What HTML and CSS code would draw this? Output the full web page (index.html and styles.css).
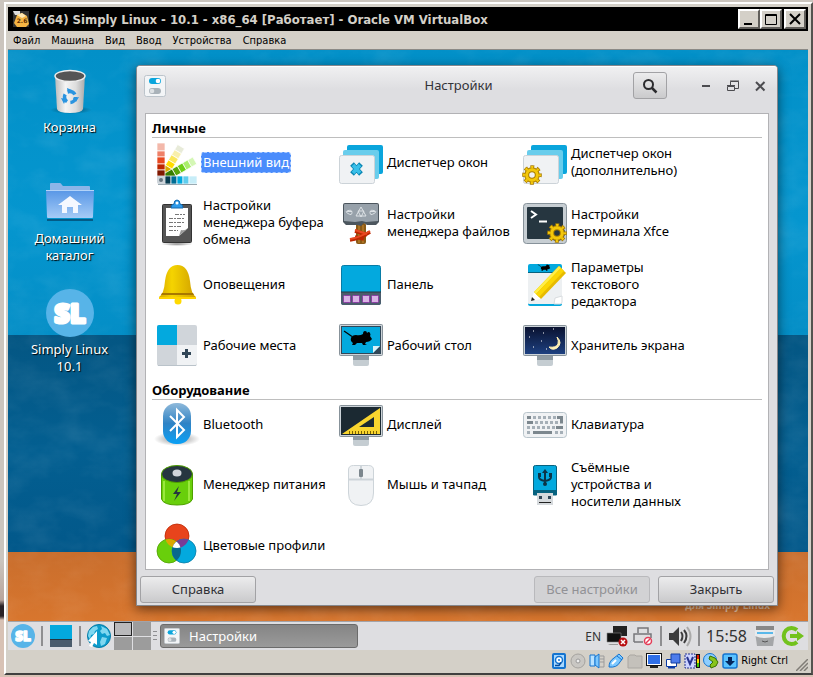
FILE: index.html
```html
<!DOCTYPE html>
<html lang="ru">
<head>
    <meta charset="UTF-8">
    <meta name="viewport" content="width=device-width, initial-scale=1.0">
    <link rel="stylesheet" href="styles.css">
    <title>Simply Linux - Oracle VM VirtualBox</title>
</head>
<body>
    <!-- shared shapes -->
    <svg class="defs" width="0" height="0" aria-hidden="true">
        <defs>
            <linearGradient id="metal" x1="0" x2="1"><stop offset="0" stop-color="#bbb"/><stop offset=".35" stop-color="#f4f4f4"/><stop offset=".7" stop-color="#ddd"/><stop offset="1" stop-color="#aaa"/></linearGradient>
            <linearGradient id="gold" x1="0" x2="1"><stop offset="0" stop-color="#d9a900"/><stop offset=".35" stop-color="#f5d400"/><stop offset="1" stop-color="#d0a000"/></linearGradient>
            <linearGradient id="folder" x1="0" x2="0" y1="0" y2="1"><stop offset="0" stop-color="#5796e6"/><stop offset="1" stop-color="#a5cbf6"/></linearGradient>
            <linearGradient id="bt" x1="0" x2="0" y1="0" y2="1"><stop offset="0" stop-color="#8fb9da"/><stop offset=".5" stop-color="#2f83c5"/><stop offset="1" stop-color="#0aa0f5"/></linearGradient>
            <linearGradient id="night" x1="0" x2="0" y1="0" y2="1"><stop offset="0" stop-color="#0a1230"/><stop offset="1" stop-color="#1d4080"/></linearGradient>
            <radialGradient id="shade"><stop offset="0" stop-color="#000" stop-opacity=".45"/><stop offset="1" stop-color="#000" stop-opacity="0"/></radialGradient>
        </defs>
        <symbol id="gear" viewBox="0 0 20 20">
            <circle cx="10" cy="10" r="7.8" fill="none" stroke="#a87c00" stroke-width="4" stroke-dasharray="3.6 2.53" stroke-dashoffset="1.8"/>
            <circle cx="10" cy="10" r="5.3" fill="none" stroke="#a87c00" stroke-width="5"/>
            <circle cx="10" cy="10" r="7.8" fill="none" stroke="#f3c70a" stroke-width="2.6" stroke-dasharray="2.2 3.93" stroke-dashoffset="1.1"/>
            <circle cx="10" cy="10" r="5.3" fill="none" stroke="#f3c70a" stroke-width="3"/>
        </symbol>
        <symbol id="mouse" viewBox="0 0 30 18">
            <path d="M1 1l8 5.500" fill="none" stroke="#000" stroke-width="1.200"/>
            <path d="M8 8q1-3 5-3 4 1 7-1 0-3 2-3 2 0 2 2 2-2 3 0 1 2 0 3l2 3q-2 3-6 3l-1 2 2 1h-4l-1-2h-5l-2 2H9l1-2q-3-2-2-5z"/>
        </symbol>
        <symbol id="toggles" viewBox="0 0 22 22">
            <rect x=".5" y=".5" width="21" height="21" rx="2" fill="#f3f5f7" stroke="#bcc4cb"/>
            <rect x="5" y="3" width="12" height="6" rx="3" fill="#0aa5dc"/><circle cx="14" cy="6" r="2.3" fill="#fff"/>
            <rect x="5" y="13" width="12" height="6" rx="3" fill="#a9b2b9"/><circle cx="8" cy="16" r="2.3" fill="#dde1e4"/>
        </symbol>
    </svg>

    <div class="vm">
        <header class="vm-title">
            <svg class="vm-logo" viewBox="0 0 16 16"><rect width="16" height="16" fill="#333"/><path d="M0 0h7v4H2z" fill="#ddd"/><path d="M4 4l5-2 5 3 2 8-3 3H4l-3-4z" fill="#f5b544"/><path d="M4 4l5-2 4 3-4 2z" fill="#ffe9b5"/><text class="logo-text" x="9" y="12" text-anchor="middle">2.6</text></svg>
            <h1>(x64) Simply Linux - 10.1 - x86_64 [Работает] - Oracle VM VirtualBox</h1>
            <button class="vm-btn" aria-label="Свернуть"><svg viewBox="0 0 16 14"><path d="M3 12h8" stroke="#000" stroke-width="2"/></svg></button>
            <button class="vm-btn" aria-label="Развернуть"><svg viewBox="0 0 16 14"><path d="M2.500 2.500h11v10h-11zM2 3.500h12" fill="none" stroke="#000"/></svg></button>
            <button class="vm-btn vm-close" aria-label="Закрыть"><svg viewBox="0 0 16 14"><path d="M3 2l10 10M13 2L3 12" stroke="#000" stroke-width="2"/></svg></button>
        </header>
        <nav class="vm-menu">
            <button>Файл</button>
            <button>Машина</button>
            <button>Вид</button>
            <button>Ввод</button>
            <button>Устройства</button>
            <button>Справка</button>
        </nav>

        <main class="desktop">
            <svg class="texture" aria-hidden="true">
                <filter id="paint"><feTurbulence type="fractalNoise" baseFrequency=".025 .04" numOctaves="4" seed="4"/><feColorMatrix values="0 0 0 0 1  0 0 0 0 1  0 0 0 0 1  1.4 0 0 0 -.55"/></filter>
                <rect width="100%" height="100%" filter="url(#paint)"/>
            </svg>
            <span class="watermark">для Simply Linux</span>
            <div class="shortcuts">
                <button class="shortcut">
                    <svg viewBox="0 0 48 48"><ellipse cx="25" cy="43" rx="21" ry="4" fill="url(#shade)"/><path d="M9 8l2 34q1 4 13 4t13-4l2-34z" fill="url(#metal)"/><ellipse cx="24" cy="9" rx="15" ry="5.5" fill="#555" stroke="#eee" stroke-width="1.5"/><circle cx="24" cy="30" r="5.500" fill="none" stroke="#2a94e0" stroke-width="3.500" stroke-dasharray="8 3.52"/><path d="M21 21l5 2-4 4zM33 30l-3 5-3-4zM18 37l-3-6 5 1z" fill="#2a94e0"/></svg>
                    <span>Корзина</span>
                </button>
                <button class="shortcut">
                    <svg viewBox="0 0 48 48"><path d="M1 41h46v2H1z" fill="#035b86"/><path d="M4 13V6q0-1 1-1h9q1 0 2 2l1 1h26q1 0 1 1v4z" fill="#8cb5e8"/><path d="M0 12h48l-1 27q0 1-1 1H2q-1 0-1-1z" fill="url(#folder)"/><path d="M0 12.500h48" stroke="#b3d3f8"/><path d="M24 18l12 9h-4v8h-5v-6h-6v6h-5v-8h-4z" fill="#f4f8ff"/></svg>
                    <span>Домашний<br>каталог</span>
                </button>
                <button class="shortcut">
                    <svg viewBox="0 0 48 48"><circle cx="24" cy="24" r="24" fill="#57b4e8"/><text class="sl-text" x="24" y="34" text-anchor="middle">SL</text></svg>
                    <span>Simply Linux<br>10.1</span>
                </button>
            </div>

            <section class="window">
                <header class="titlebar">
                    <svg class="app-icon" viewBox="0 0 22 22"><use href="#toggles"/></svg>
                    <h2>Настройки</h2>
                    <div class="controls">
                        <button class="search" aria-label="Поиск"><svg viewBox="0 0 16 16"><circle cx="6.500" cy="6.500" r="4.500" fill="none" stroke="#2b2b2e" stroke-width="2"/><path d="M10 10l4.500 4.500" stroke="#2b2b2e" stroke-width="2.500"/></svg></button>
                        <button class="ctl" aria-label="Свернуть"><svg viewBox="0 0 14 14"><path d="M3 7h8" stroke="#4c4c50" stroke-width="2"/></svg></button>
                        <button class="ctl" aria-label="Восстановить"><svg viewBox="0 0 14 14"><path d="M4.500 6V2.500h8v7H9M1.500 7.500h7v4h-7zM1 6.500h8M4 2h9" fill="none" stroke="#4c4c50"/></svg></button>
                        <button class="ctl" aria-label="Закрыть"><svg viewBox="0 0 14 14"><path d="M3 3l8.500 8.500M11.500 3L3 11.500" stroke="#4c4c50" stroke-width="2"/></svg></button>
                    </div>
                </header>
                <div class="pane">
                    <h3>Личные</h3>
                    <div class="items">
                        <button class="item selected">
                            <svg viewBox="0 0 48 48">
                                <g stroke="#fff" stroke-width=".7"><g transform="rotate(31 8 42)"><path d="M4 3h8v6H4z" fill="#e8ebd9"/><path d="M4 9h8v6H4z" fill="#f8efac"/><path d="M4 15h8v6H4z" fill="#fae75d"/><path d="M4 21h8v6H4z" fill="#ffdc00"/><path d="M4 27h8v12H4z" fill="#d8a900"/></g>
                                <g transform="rotate(60 8 42)"><path d="M4 3h8v6H4z" fill="#d4f7b5"/><path d="M4 9h8v6H4z" fill="#a9ee6a"/><path d="M4 15h8v6H4z" fill="#6dce17"/><path d="M4 21h8v6H4z" fill="#58a60a"/><path d="M4 27h8v12H4z" fill="#377d00"/></g>
                                <path d="M4 5h8v8H4z" fill="#f3b8aa"/><path d="M4 13h8v6H4z" fill="#ef8068"/><path d="M4 19h8v7H4z" fill="#e84820"/><path d="M4 26h8v6H4z" fill="#bd2600"/><path d="M4 32h8v6H4z" fill="#801800"/>
                                <path d="M12 38h6v8h-6z" fill="#073b50"/><path d="M18 38h6v8h-6z" fill="#006d94"/><path d="M24 38h6v8h-6z" fill="#00aadf"/><path d="M30 38h6v8h-6z" fill="#60cdee"/><path d="M36 38h8v8h-8z" fill="#c7edf8"/></g>
                                <path d="M4 38h8v8H6q-2 0-2-2z" fill="#cdd4da"/><circle cx="8" cy="42" r="2" fill="#65737d"/><path d="M5 46.500h39" stroke="#9aa9b1"/>
                            </svg>
                            <span>Внешний вид</span>
                        </button>
                        <button class="item">
                            <svg viewBox="0 0 48 48"><rect x="10" y="7" width="36" height="29" rx="2" fill="#0aa5dc"/><rect x="6" y="12" width="36" height="29" rx="2" fill="#69cdec"/><rect x="2.500" y="17.500" width="35" height="28" rx="2" fill="#f0f2f4" stroke="#ccd3d8"/><path d="M15 26l9 10M24 26l-9 10" stroke="#0a86b3" stroke-width="5"/><path d="M16 27l7 8M23 27l-7 8" stroke="#39bfe9" stroke-width="3.500"/></svg>
                            <span>Диспетчер окон</span>
                        </button>
                        <button class="item">
                            <svg viewBox="0 0 48 48"><rect x="10" y="7" width="36" height="29" rx="2" fill="#0aa5dc"/><rect x="6" y="12" width="36" height="29" rx="2" fill="#69cdec"/><rect x="2.500" y="17.500" width="35" height="28" rx="2" fill="#f0f2f4" stroke="#ccd3d8"/><use href="#gear" x="1" y="27" width="20" height="20"/></svg>
                            <span>Диспетчер окон<br>(дополнительно)</span>
                        </button>
                        <button class="item">
                            <svg viewBox="0 0 48 48"><ellipse cx="24" cy="45" rx="16" ry="2" fill="url(#shade)"/><rect x="9.500" y="5.500" width="29" height="38" rx="1" fill="#555" stroke="#333"/><path d="M13 9h22v20l-9 8H13z" fill="#fff"/><path d="M35 29l-9 8 2-6q4 1 7-2z" fill="#999"/><path d="M22 15.500h10M16 19.500h15M16 23.500h15M16 27.500h13M16 31.500h9" stroke="#777" stroke-dasharray="4 1 2 1"/><path d="M18 9q0-4 3-4 0-4 3-4t3 4q3 0 3 4z" fill="#2f9bea" stroke="#176bb0"/><circle cx="24" cy="4" r="1.500" fill="#fff"/></svg>
                            <span>Настройки<br>менеджера буфера<br>обмена</span>
                        </button>
                        <button class="item">
                            <svg viewBox="0 0 48 48"><rect x="19" y="24" width="10" height="21" rx="2" fill="#8a5a16"/><path d="M22 26v18M26 26v18" stroke="#b67b28" stroke-width="1.500"/><path d="M6 6q0-2 2-2h32q2 0 2 2v17l-3 3H30l-3-2-3 3-4-1H9l-3-3z" fill="#4c565e"/><path d="M7 6q0-1 1-1h32q1 0 1 1v16l-12 1-4-1-7 1-11-1z" fill="#97a1aa"/><path d="M10 12q5-2 5 1.500t-4 1 0-2h4M38 12q-5-2-5 1.500t4 1 0-2h-4M19 17l5-9 5 9zM21 12h6l-3 6z" fill="none" stroke="#dce1e5"/><path d="M18 32l12 4M13 41q9-1 20-8M18 38l9 2" fill="none" stroke="#bd2600" stroke-width="3.500"/><path d="M18 31l12 4M13 40q9-1 20-8" fill="none" stroke="#e84820" stroke-width="2"/></svg>
                            <span>Настройки<br>менеджера файлов</span>
                        </button>
                        <button class="item">
                            <svg viewBox="0 0 48 48"><rect x="2.500" y="4.500" width="43" height="40" rx="3" fill="#c7ced3" stroke="#87929a"/><rect x="6" y="8" width="36" height="32" rx="1" fill="#263640"/><path d="M10 12l5 3.500-5 3.500M18 22.500h8" fill="none" stroke="#fff" stroke-width="2"/><circle cx="36" cy="34" r="8" fill="#263640"/><use href="#gear" x="26" y="24" width="20" height="20"/></svg>
                            <span>Настройки<br>терминала Xfce</span>
                        </button>
                        <button class="item">
                            <svg viewBox="0 0 48 48"><circle cx="25" cy="40" r="3.500" fill="#ffd900"/><path d="M6 36q5-3 6-16Q14 4 24.500 4T37 20q1 13 6 16v2H6z" fill="url(#gold)"/><path d="M9 32h31l1 2H8z" fill="#a87800"/><path d="M6 36h37v2H6z" fill="#ffd400"/></svg>
                            <span>Оповещения</span>
                        </button>
                        <button class="item">
                            <svg viewBox="0 0 48 48"><rect x="4.500" y="4.500" width="39" height="39" rx="2" fill="#03a9de" stroke="#087ca6"/><path d="M4 31h40v11q0 2-2 2H6q-2 0-2-2z" fill="#4b5c6c"/><path d="M4 31h40" stroke="#263640"/><g fill="#d9b3e5" stroke="#8c3da5"><rect x="6.500" y="34.500" width="7" height="7" rx="1"/><rect x="15.500" y="34.500" width="7" height="7" rx="1"/><rect x="25.500" y="34.500" width="7" height="7" rx="1"/><rect x="34.500" y="34.500" width="7" height="7" rx="1"/></g></svg>
                            <span>Панель</span>
                        </button>
                        <button class="item">
                            <svg viewBox="0 0 48 48"><path d="M7 5q0-2 2-2h30q2 0 2 2v38q0 2-2 2H9q-2 0-2-2z" fill="#03a9de"/><path d="M7 12h34v30q0 1-1 1H8q-1 0-1-1z" fill="#edf0f2"/><path d="M7 11.500h34" stroke="#07627f"/><path d="M33 43l1-6 7-2v6q0 2-2 2z" fill="#fff" stroke="#d8dcdf"/><use href="#mouse" x="15" y="3" width="16" height="8"/><path d="M10 40l3-9 7 7z" fill="#fff"/><path d="M10 40l1-4 3 3z" fill="#222"/><path d="M13 31L38 5l7 7-25 26z" fill="#e7bb00"/><path d="M13 31L38 5l2 2-25 26z" fill="#ffee45"/><path d="M15 33L40 7l3 3-25 26z" fill="#fbd705"/></svg>
                            <span>Параметры<br>текстового<br>редактора</span>
                        </button>
                        <button class="item">
                            <svg viewBox="0 0 48 48"><rect x="4" y="4" width="40" height="41" rx="2" fill="#d0d5da"/><path d="M4 24V6q0-2 2-2h18v20z" fill="#03a9de"/><path d="M24 24h20v18q0 2-2 2H24z" fill="#f0f2f4"/><path d="M5 44.500h38" fill="none" stroke="#bac3ca"/><path d="M29 32.500h9M33.500 28v9" stroke="#314657" stroke-width="3"/></svg>
                            <span>Рабочие места</span>
                        </button>
                        <button class="item">
                            <svg viewBox="0 0 48 48"><path d="M16 35h16v8q0 2-2 2H18q-2 0-2-2z" fill="#c5cdd2"/><path d="M16 35h16v4H16z" fill="#8f9ba3"/><rect x="2.500" y="3.500" width="43" height="31" rx="1" fill="#ccd3d8" stroke="#87929a"/><rect x="4" y="5" width="40" height="28" fill="#314657"/><path d="M5 6h38v19l-7 7H5z" fill="#03a9de"/><path d="M36 32v-7h7z" fill="#d9f1f8"/><use href="#mouse" x="6" y="9" width="30" height="18"/></svg>
                            <span>Рабочий стол</span>
                        </button>
                        <button class="item">
                            <svg viewBox="0 0 48 48"><path d="M16 35h16v8q0 2-2 2H18q-2 0-2-2z" fill="#c5cdd2"/><path d="M16 35h16v4H16z" fill="#8f9ba3"/><rect x="2.500" y="4.500" width="43" height="30" rx="1" fill="#ccd3d8" stroke="#87929a"/><rect x="4" y="6" width="40" height="27" fill="url(#night)"/><path d="M36 16q6 6 0 11-5 3-8-1 7 1 9-3 1-3-1-7z" fill="#fff1b5" stroke="#fff1b5"/><path d="M12 10h1M22 12h1M8 16h1M32 8h1M20 20h1M12 26h1M25 28h1" stroke="#fff"/></svg>
                            <span>Хранитель экрана</span>
                        </button>
                    </div>

                    <h3>Оборудование</h3>
                    <div class="items">
                        <button class="item">
                            <svg viewBox="0 0 48 48"><ellipse cx="24" cy="39" rx="23" ry="7" fill="url(#shade)"/><rect x="10" y="3" width="28" height="41" rx="13" fill="url(#bt)"/><path d="M17 16l14 14-7 7V10l7 7-14 14" fill="none" stroke="#fff" stroke-width="2"/></svg>
                            <span>Bluetooth</span>
                        </button>
                        <button class="item">
                            <svg viewBox="0 0 48 48"><path d="M16 37h16v7q0 2-2 2H18q-2 0-2-2z" fill="#c5cdd2"/><path d="M16 37h16v3H16z" fill="#8f9ba3"/><rect x="2.500" y="5.500" width="43" height="31" rx="1" fill="#ccd3d8" stroke="#87929a"/><rect x="4" y="7" width="40" height="28" fill="#1b2932"/><path d="M5 34L43 8v26zM37 17L22 27h15z" fill="#f9d52e" fill-rule="evenodd"/><path d="M12 32.500h30" stroke="#7b6200" stroke-width="3" stroke-dasharray="1 2"/></svg>
                            <span>Дисплей</span>
                        </button>
                        <button class="item">
                            <svg viewBox="0 0 48 48"><rect x="2.500" y="12.500" width="43" height="25" rx="3" fill="#f0f2f4" stroke="#b8c4cb"/><g stroke="#a5afb7" stroke-width="3" stroke-dasharray="3 2"><path d="M12 17.500h24M14 22.500h24M6 27.500h30M6 32.500h4M34 32.500h9"/></g><path d="M6 17.500h4M6 22.500h6M36 17.500h4.500v6M35 27.500h7M12 32.500h19" fill="none" stroke="#7c878e" stroke-width="3"/></svg>
                            <span>Клавиатура</span>
                        </button>
                        <button class="item">
                            <svg viewBox="0 0 48 48"><path d="M8.500 13v25q2 6 15.500 6t15.500-6V13z" fill="#69cf0b" stroke="#4fa000"/><path d="M11 20v20M36 20v20" stroke="#9ae83d" stroke-width="2"/><ellipse cx="24" cy="13" rx="15.500" ry="8.500" fill="#263640" stroke="#4fa000"/><ellipse cx="24" cy="12" rx="4.500" ry="3.500" fill="#d0d5da"/><path d="M26 25l-6 8h4l-3 7 7-9h-4z" fill="#263640"/></svg>
                            <span>Менеджер питания</span>
                        </button>
                        <button class="item">
                            <svg viewBox="0 0 48 48"><path d="M11.500 9q0-4.500 5-4.500h15q5 0 5 4.500v23q0 12.500-12.500 12.500T11.500 32z" fill="#f0f2f4" stroke="#cdd4d9"/><path d="M12 18.500h24M24 5v3M24 16v3" stroke="#cdd4d9" stroke-width="2"/><rect x="22" y="8" width="4" height="8" rx="1" fill="#7c878e"/></svg>
                            <span>Мышь и тачпад</span>
                        </button>
                        <button class="item">
                            <svg viewBox="0 0 48 48"><path d="M16 34h16v10H16z" fill="#d6dadd"/><path d="M18 35h3v3h-3zM27 35h3v3h-3z" fill="#314657"/><path d="M18 41.500h12" stroke="#222"/><path d="M12.500 6q0-1.500 2-1.500h19q2 0 2 1.500v28h-23z" fill="#03a9de" stroke="#07627f"/><path d="M12 29h24v5H12z" fill="#07627f"/><path d="M16 32h16v8H16z" fill="#d6dadd"/><path d="M18 35h3v3h-3zM27 35h3v3h-3z" fill="#314657"/><path d="M24 10v13M18 14v2q0 3 6 4 6-1 6-4v-2" fill="none" stroke="#0b3447" stroke-width="2"/><path d="M21 12l3-4 3 4zM17 12h3v4h-3zM28 12h3v4h-3z" fill="#0b3447"/><circle cx="24" cy="23" r="2" fill="#0b3447"/></svg>
                            <span>Съёмные<br>устройства и<br>носители данных</span>
                        </button>
                        <button class="item">
                            <svg viewBox="0 0 48 48">
                                <clipPath id="c1"><circle cx="24" cy="15" r="12"/></clipPath><clipPath id="c2"><circle cx="16" cy="30" r="12"/></clipPath><clipPath id="c3"><circle cx="31" cy="30" r="12"/></clipPath>
                                <circle cx="24" cy="15" r="12" fill="#e8441c" stroke="#bd2600" stroke-width=".8"/><circle cx="16" cy="30" r="12" fill="#69cf0b" stroke="#4fa000" stroke-width=".8"/><circle cx="31" cy="30" r="12" fill="#03a9de" stroke="#087ca6" stroke-width=".8"/>
                                <g clip-path="url(#c1)"><circle cx="16" cy="30" r="12" fill="#dba800"/><circle cx="31" cy="30" r="12" fill="#783c96"/></g>
                                <g clip-path="url(#c2)"><circle cx="31" cy="30" r="12" fill="#07698d"/><g clip-path="url(#c3)"><circle cx="24" cy="15" r="12" fill="#fff"/></g></g>
                            </svg>
                            <span>Цветовые профили</span>
                        </button>
                    </div>
                </div>
                <footer class="actions">
                    <button>Справка</button>
                    <button class="push" disabled>Все настройки</button>
                    <button>Закрыть</button>
                </footer>
            </section>
        </main>

        <footer class="panel">
            <button class="launch" aria-label="Меню"><svg viewBox="0 0 48 48"><circle cx="24" cy="24" r="24" fill="#57b4e8"/><text class="sl-text" x="24" y="34" text-anchor="middle">SL</text></svg></button>
            <i class="sep"></i>
            <button class="launch" aria-label="Рабочий стол"><svg viewBox="0 0 24 24"><path d="M1 1h22v14H1z" fill="#03a9de"/><path d="M1 15h22v8H1z" fill="#4b5c6c"/><path d="M1 15.500h22" stroke="#263640"/></svg></button>
            <i class="sep"></i>
            <button class="launch" aria-label="Браузер"><svg viewBox="0 0 24 24"><circle cx="12" cy="12" r="11.500" fill="#0d9ccc" stroke="#087ca6"/><path d="M2 7l4-4 4-1 1 3-3 2-1 3-3 1-1 4-2-3zM14 2l6 3 3 6-3 1-2-3-3 1-2-3 2-2zM15 13l5 1-2 6-4 2-1-4z" fill="#7fd7f0"/><path d="M10 7v14l-3-2-2 4-3-1 2-4-3-1z" fill="#fff"/></svg></button>
            <div class="pager"><i class="current"></i><i></i><i></i><i></i></div>
            <i class="handle"></i>
            <button class="task"><svg viewBox="0 0 22 22"><use href="#toggles"/></svg>Настройки</button>
            <div class="tray">
                <span class="lang">EN</span>
                <svg class="tray-icon" viewBox="0 0 22 22"><path d="M7 1h14v10H7z" fill="#222"/><path d="M1 8h14v9H1z" fill="#111" stroke="#888" stroke-width=".6"/><path d="M4 19h8v1H2z" fill="#999"/><circle cx="17" cy="17" r="4.500" fill="#b80e12"/><path d="M15 15l4 4M19 15l-4 4" stroke="#fff" stroke-width="1.500"/></svg>
                <svg class="tray-icon" viewBox="0 0 22 22"><path d="M6 8V3h10v5M2 17V9h17v4M2 17h9" fill="none" stroke="#77777b" stroke-width="1.500"/><circle cx="16" cy="16" r="3.500" fill="#fff" stroke="#e43d58" stroke-width="1.500"/><path d="M14 18l4-4" stroke="#e43d58" stroke-width="1.500"/></svg>
                <i class="sep"></i>
                <svg class="tray-icon wide" viewBox="0 0 24 22"><path d="M1 8h4l6-6v19l-6-6H1z" fill="#3b3b3d"/><path d="M13 7q3 4 0 9M16 5q5 6 0 13" fill="none" stroke="#3b3b3d" stroke-width="2"/><path d="M19 2q7 9 0 19" fill="none" stroke="#aaa" stroke-width="2"/></svg>
                <i class="sep"></i>
                <time>15:58</time>
                <svg class="tray-icon" viewBox="0 0 22 22"><path d="M2 1h18v6H2z" fill="#888"/><path d="M1 7h20l-2 14H3z" fill="#a4a6a8"/><path d="M1 5h20v6q-10 4-20 0z" fill="#e8eaec"/><path d="M3 8h16" stroke="#59b8ea" stroke-width="2"/><path d="M8 16q3 2 6 0" fill="none" stroke="#555"/></svg>
                <svg class="tray-icon wide" viewBox="0 0 24 22"><path d="M17 5a8 8 0 1 0 0 12" fill="none" stroke="#72c21d" stroke-width="4"/><path d="M10 9h7V6l7 5-7 5v-3h-7z" fill="#72c21d"/></svg>
            </div>
        </footer>

        <footer class="status">
            <svg viewBox="0 0 16 16"><rect x="2" y="1" width="12" height="14" rx="1" fill="#a8d8ff" stroke="#1474d0" stroke-width="2"/><circle cx="8" cy="7" r="3.500" fill="#fff" stroke="#1474d0" stroke-width="1.500"/><circle cx="8" cy="7" r="1" fill="#1474d0"/><path d="M4 12.500h4l2-3" fill="none" stroke="#034a9b" stroke-width="1.500"/></svg>
            <svg viewBox="0 0 16 16"><circle cx="8" cy="8" r="7" fill="#c9c7c3" stroke="#a5a39f"/><circle cx="8" cy="8" r="2" fill="#eee" stroke="#999"/></svg>
            <svg viewBox="0 0 16 16"><path d="M1 2h5v11H1z" fill="#b9e2ff" stroke="#1474d0"/><path d="M6 4l4-3v14l-4-3z" fill="#7cc8ff" stroke="#1474d0"/><path d="M11 3h4v11h-4M11 6h4M11 9h4" fill="none" stroke="#9b9b9b"/></svg>
            <svg viewBox="0 0 16 16"><path d="M1 14q0-6 5-9l5-4 4 4-3 4q-3 6-11 5z" fill="#7cc8ff" stroke="#1474d0"/><path d="M9 3l5 4" stroke="#1474d0"/><path d="M4 11l4-4" stroke="#fff" stroke-width="2"/></svg>
            <svg viewBox="0 0 16 16"><path d="M1 4l2-2h5l1 1h6v12H1z" fill="#c4c1bb" stroke="#aaa7a2"/></svg>
            <svg viewBox="0 0 16 16"><rect x="1.500" y="1.500" width="13" height="10" fill="#2f6fe8" stroke="#fff"/><rect x=".5" y=".5" width="15" height="12" fill="none" stroke="#111"/><path d="M4 14h8" stroke="#222" stroke-width="2"/></svg>
            <svg viewBox="0 0 16 16"><path d="M1.500 6.500h10v7h-10z" fill="#fff" stroke="#0a3aa5"/><path d="M6 1h9v9H6z" fill="#4d7ceb" stroke="#143e9f"/><path d="M3 14.500h7" stroke="#0a3aa5" stroke-width="2"/></svg>
            <svg viewBox="0 0 16 16"><path d="M1 1h10v14H1z" fill="#cdd4ff" stroke="#27348f" stroke-dasharray="2 1"/><path d="M3 4l3 7 3-7" fill="none" stroke="#27348f" stroke-width="2"/><path d="M12 1h4v14h-4z" fill="#111"/><path d="M13 2h2v4h-2z" fill="#e41b00"/><path d="M13 6h2v4h-2z" fill="#fd0"/><path d="M13 10h2v4h-2z" fill="#3ec400"/></svg>
            <svg viewBox="0 0 16 16"><circle cx="7" cy="7" r="6.500" fill="#8dceff" stroke="#1474d0"/><path d="M7 3l5 2 3 4-2 4-5 2-1-3 3-3-4-3z" fill="#88c51b" stroke="#397000"/></svg>
            <svg viewBox="0 0 16 16"><rect x="1" y="1" width="14" height="14" rx="2" fill="#59c2ff" stroke="#1474d0" stroke-width="1.500"/><path d="M6 4h4v4h3l-5 5-5-5h3z" fill="#05265c"/></svg>
            <span>Right Ctrl</span>
            <svg class="grip" viewBox="0 0 12 12"><path d="M0 12L12 0M4 12l8-8M8 12l4-4" stroke="#807d77" stroke-width="1.500"/></svg>
        </footer>
    </div>
</body>
</html>
```
FILE: styles.css
```css
* {
    box-sizing: border-box;
}

body {
    margin: 0;
    padding: 2px 0 2px 4px;
    min-height: 100vh;
    display: flex;
    background: linear-gradient(#cbc5be 560px, #b9a59c 600px, #2a2226 606px, #2a2226 616px, #d8c2b5 620px);
    font-family: "Noto Sans", sans-serif;
    font-size: 13px;
    line-height: 17px;
    color: #000;
}

button {
    font: inherit;
    color: inherit;
    border: 0;
    padding: 0;
    background: none;
}

svg {
    display: block;
    flex: none;
}

h1, h2, h3 {
    margin: 0;
    font-size: 13px;
}

.defs {
    position: absolute;
}

.sl-text {
    font: 800 27px "Open Sans", sans-serif;
    fill: #fff;
    stroke: #fff;
    stroke-width: 3px;
    stroke-linejoin: round;
    text-shadow: none;
}

.logo-text {
    font: bold 6px "DejaVu Sans", sans-serif;
    fill: #5b2c00;
}

/* virtual machine window */
.vm {
    flex: 1;
    min-width: 0;
    display: flex;
    flex-direction: column;
    padding: 3px 3px 0 2px;
    background: #d4d0c8;
    border: 2px solid #fff;
    border-right-color: #55534f;
    border-bottom-color: #404040;
}

.vm-title {
    display: flex;
    align-items: center;
    height: 24px;
    padding: 0 2px 0 5px;
    background: #000;
    color: #d4d0c8;
    font-family: "DejaVu Sans Condensed", "DejaVu Sans", sans-serif;
}

.vm-title h1 {
    flex: 1;
    margin-left: 5px;
    white-space: nowrap;
    overflow: hidden;
}

.vm-logo {
    width: 16px;
    height: 16px;
}

.vm-btn {
    width: 22px;
    height: 20px;
    padding: 1px;
    background: #d4d0c8;
    border: 2px solid;
    border-color: #fff #605e5a #605e5a #fff;
}

.vm-btn svg {
    width: 16px;
    height: 14px;
}

.vm-close {
    margin-left: 2px;
}

.vm-menu {
    display: flex;
    gap: 11px;
    height: 19px;
    padding: 0 0 0 5px;
    border-bottom: 1px solid #8b8a86;
    font-family: "DejaVu Sans Condensed", "DejaVu Sans", sans-serif;
    font-size: 11px;
}

/* guest desktop */
.desktop {
    position: relative;
    flex: 1;
    overflow: hidden;
    background: linear-gradient(#0290c8 0, #0596cf 30%, #048ec6 50%, #045683 50%, #035f91 70%, #02588a 88%, #c96e2d 88%, #d8762e 100%);
}

.texture {
    position: absolute;
    inset: 0;
    width: 100%;
    height: 100%;
    opacity: .1;
}

.watermark {
    position: absolute;
    right: 38px;
    bottom: 7px;
    font-size: 10px;
    font-weight: bold;
    color: #eec7a8;
}

.shortcuts {
    position: relative;
    display: flex;
    flex-direction: column;
    gap: 25px;
    width: 123px;
    padding-top: 17px;
}

.shortcut {
    display: flex;
    flex-direction: column;
    align-items: center;
    gap: 4px;
    min-height: 86px;
    color: #fff;
    text-shadow: 1px 1px 1px #000;
}

.shortcut svg {
    width: 48px;
    height: 48px;
}

/* settings window */
.window {
    position: absolute;
    top: 15px;
    left: 128px;
    right: 30px;
    border: 1px solid #85878c;
    border-radius: 4px 4px 0 0;
    background: #dedee1;
    box-shadow: 0 3px 12px rgba(0, 0, 0, .55);
}

.titlebar {
    display: grid;
    grid-template-columns: 1fr auto 1fr;
    align-items: center;
    height: 38px;
    padding: 0 4px 0 7px;
    border-radius: 3px 3px 0 0;
    background: linear-gradient(#f0f0f1, #dedee1 60%);
    border-top: 1px solid #fff;
    color: #333338;
}

.titlebar h2 {
    font-weight: normal;
}

.app-icon {
    width: 22px;
    height: 22px;
}

.controls {
    display: flex;
    align-items: center;
    justify-content: flex-end;
}

.search {
    display: grid;
    place-items: center;
    width: 34px;
    height: 27px;
    margin-right: 25px;
}

.search svg {
    width: 16px;
    height: 16px;
}

.search, .actions button {
    border: 1px solid #a2a2a5;
    border-radius: 3px;
    background: linear-gradient(#ececed, #cacacc);
}

.ctl {
    display: grid;
    place-items: center;
    width: 27px;
    height: 27px;
}

.ctl svg {
    width: 14px;
    height: 14px;
}

.pane {
    margin: 9px 8px 6px;
    padding: 5px 6px 0;
    background: #fff;
    border: 1px solid #b2b2b5;
}

.pane h3 {
    line-height: 18px;
    border-bottom: 1px solid #bebebe;
}

.items + h3 {
    margin-top: 12px;
}

.items {
    display: grid;
    grid-template-columns: repeat(auto-fill, 184px);
    row-gap: 11px;
    padding-left: 1px;
}

.item {
    display: flex;
    align-items: center;
    text-align: left;
    white-space: nowrap;
}

.item svg {
    width: 48px;
    height: 48px;
}

.item span {
    padding: 0 2px;
}

.item.selected span {
    padding: 1px;
    border: 1px dashed #a9cbff;
    border-radius: 3px;
    background: #4a8cfc;
    color: #fff;
}

.actions {
    display: flex;
    gap: 8px;
    padding: 0 3px 2px;
}

.actions button {
    width: 116px;
    height: 27px;
    color: #303035;
}

.actions .push {
    margin-left: auto;
}

.actions button:disabled {
    border-color: #b9b9bc;
    background: #d2d2d4;
    color: #919195;
}

/* taskbar of the guest */
.panel {
    position: relative;
    display: flex;
    align-items: center;
    height: 29px;
    padding-left: 3px;
    background: #dedee1;
    border-top: 1px solid #a3a3a8;
}

.launch, .launch svg {
    width: 24px;
    height: 24px;
}

.sep {
    width: 2px;
    height: 20px;
    margin: 0 6px;
    background: #8e8e91;
}

.pager {
    display: grid;
    grid-template-columns: 18px 18px;
    grid-auto-rows: 14px;
    gap: 1px;
    height: 28px;
    margin-left: 3px;
    overflow: hidden;
}

.pager i {
    background: #9c9c9c;
}

.pager .current {
    border: 1px solid #222;
    background: #b9b9bb;
}

.handle {
    width: 4px;
    height: 10px;
    margin: 0 3px 0 2px;
    background: repeating-linear-gradient(#8e8e91 0 1px, transparent 1px 4px);
}

.task {
    display: flex;
    align-items: center;
    gap: 9px;
    width: 198px;
    height: 24px;
    padding-left: 3px;
    border: 1px solid #6b6b6b;
    border-radius: 3px;
    background: linear-gradient(#858585, #9a9a9a);
    color: #fff;
}

.task svg {
    width: 16px;
    height: 16px;
}

.tray {
    display: flex;
    align-items: center;
    margin-left: auto;
    padding-right: 4px;
    color: #333;
}

.lang {
    font-size: 12px;
    margin-right: 5px;
}

.tray-icon {
    width: 22px;
    height: 22px;
}

.tray-icon + .tray-icon {
    margin-left: 4px;
}

.wide {
    width: 24px;
}

.tray time {
    font-size: 16px;
    margin-right: 7px;
}

.status {
    display: flex;
    align-items: center;
    justify-content: flex-end;
    gap: 3px;
    height: 23px;
    padding-bottom: 2px;
    font-family: "DejaVu Sans Condensed", "DejaVu Sans", sans-serif;
    font-size: 11px;
}

.status svg {
    width: 16px;
    height: 16px;
}

.status .grip {
    width: 12px;
    height: 12px;
    margin-left: 5px;
    align-self: flex-end;
}
```
